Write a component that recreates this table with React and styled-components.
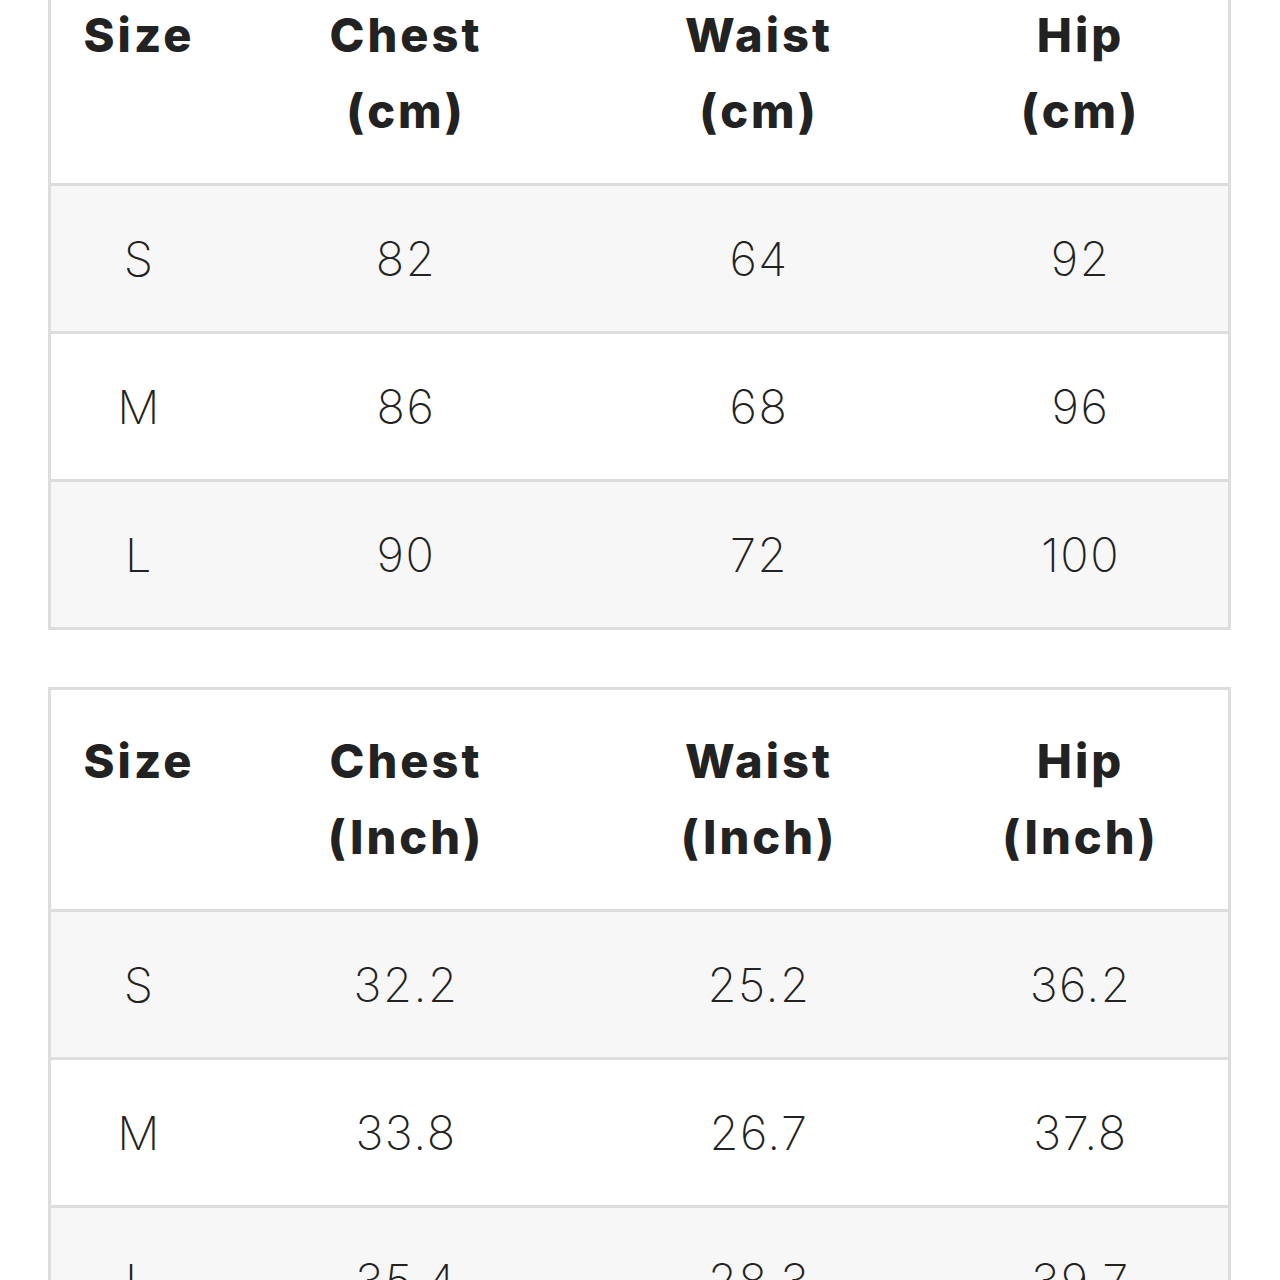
import React from "react";
import styled, { createGlobalStyle } from "styled-components";

const Global = createGlobalStyle`
  html, body { margin: 0; padding: 0; background: #ffffff; }
  body { font-family: Inter, "Noto Sans", sans-serif; color: #222222; overflow: hidden; height: 1280px; }
`;

const Page = styled.div`
  display: flex;
  flex-direction: column;
  gap: 57px;
  padding: 0 49px 0 48px;
  margin-top: -39px;
`;

const Table = styled.div`
  border: 3px solid #dddddd;
  display: flex;
  flex-direction: column;
`;

const Row = styled.div`
  display: grid;
  grid-template-columns: 176px 358px 348px 1fr;
  height: ${(p) => (p.$head ? 219 : 145)}px;
  background: ${(p) => (p.$shade ? "#f7f7f7" : "#ffffff")};
  border-top: ${(p) => (p.$head ? "none" : "3px solid #dddddd")};
`;

const HeadCell = styled.div`
  display: flex;
  align-items: flex-start;
  justify-content: center;
  box-sizing: border-box;
  padding-top: 33px;
  text-align: center;
  font-weight: 800;
  font-size: 47px;
  line-height: 76px;
  letter-spacing: 3px;
  color: #222222;
`;

const Cell = styled.div`
  display: flex;
  align-items: center;
  justify-content: center;
  font-weight: 250;
  font-size: 47px;
  letter-spacing: 1.5px;
  color: #222222;
`;

const tables = [
  {
    unit: "cm",
    rows: [
      ["S", "82", "64", "92"],
      ["M", "86", "68", "96"],
      ["L", "90", "72", "100"],
    ],
  },
  {
    unit: "Inch",
    rows: [
      ["S", "32.2", "25.2", "36.2"],
      ["M", "33.8", "26.7", "37.8"],
      ["L", "35.4", "28.3", "39.7"],
    ],
  },
];

export default function App() {
  return (
    <>
      <Global />
      <Page>
        {tables.map((t) => (
          <Table key={t.unit}>
            <Row $head>
              <HeadCell>Size</HeadCell>
              <HeadCell>Chest<br />({t.unit})</HeadCell>
              <HeadCell>Waist<br />({t.unit})</HeadCell>
              <HeadCell>Hip<br />({t.unit})</HeadCell>
            </Row>
            {t.rows.map((r, i) => (
              <Row key={r[0]} $shade={i % 2 === 0}>
                {r.map((v, j) => (
                  <Cell key={j}>{v}</Cell>
                ))}
              </Row>
            ))}
          </Table>
        ))}
      </Page>
    </>
  );
}
